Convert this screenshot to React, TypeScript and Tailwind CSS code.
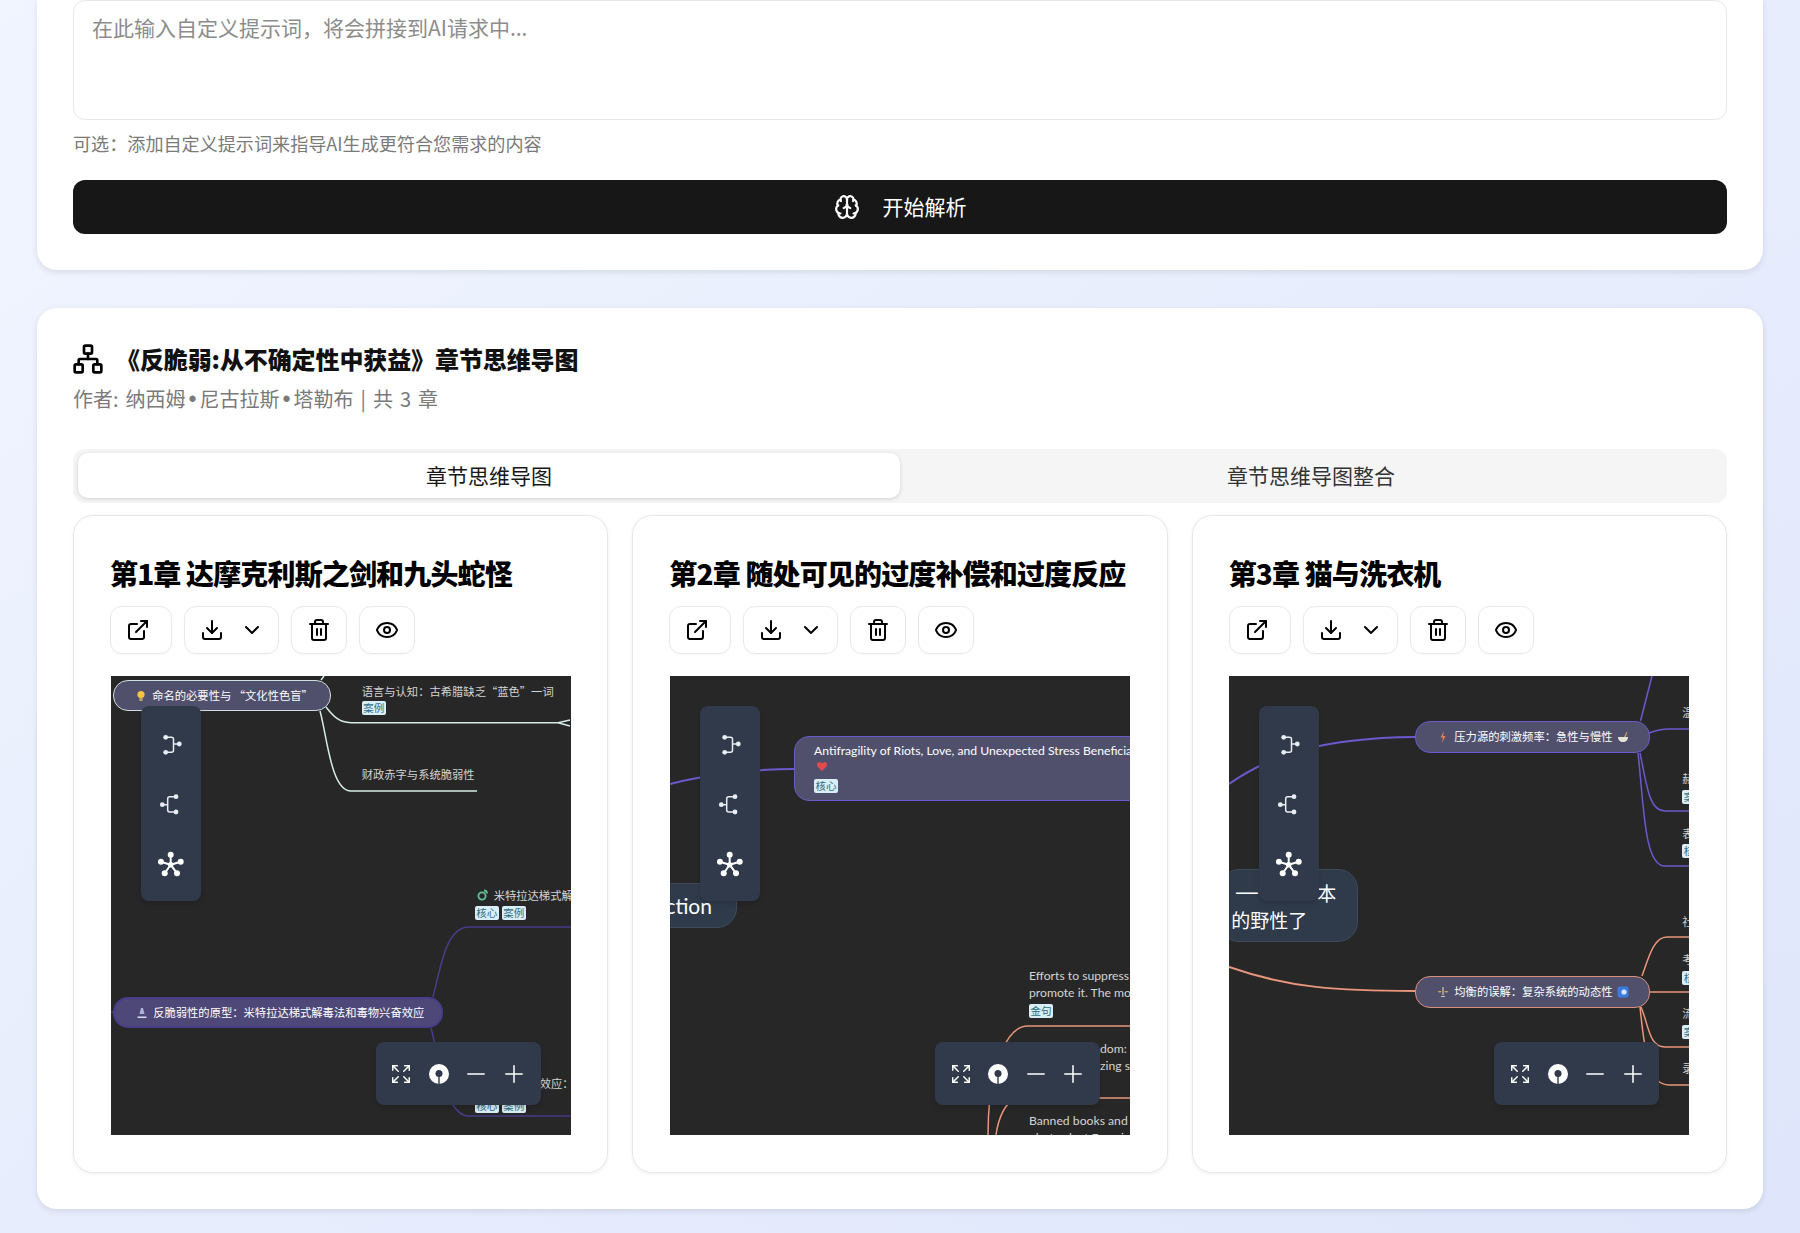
import type { ReactNode } from 'react';
import { Brain, ChevronDown, Download, Expand, ExternalLink, Eye, Minus, Network, Plus, Trash2 } from 'lucide-react';

// mind-elixir side toolbar icons
const RightBranchIcon = () => (
  <svg width="24" height="24" viewBox="0 0 24 24" fill="none" className="text-[#e8edf2]">
    <path d="M7 5.3h5.500a2 2 0 0 1 2 2v11a2 2 0 0 1-2 2H7M14.500 12H20" stroke="currentColor" strokeWidth="1.500" />
    <circle cx="6.700" cy="5.300" r="2.400" fill="currentColor" />
    <circle cx="6.700" cy="20.300" r="2.400" fill="currentColor" />
    <circle cx="20.300" cy="12" r="2.400" fill="currentColor" />
  </svg>
);

const LeftBranchIcon = () => (
  <svg width="24" height="24" viewBox="0 0 24 24" fill="none" className="text-[#e8edf2]">
    <path d="M17 4.700h-6.300a2 2 0 0 0-2 2V18a2 2 0 0 0 2 2H17M8.700 12.700H3.500" stroke="currentColor" strokeWidth="1.500" />
    <circle cx="3.300" cy="12.700" r="2.400" fill="currentColor" />
    <circle cx="17" cy="4.700" r="2.400" fill="currentColor" />
    <circle cx="17" cy="20" r="2.400" fill="currentColor" />
  </svg>
);

const BothBranchIcon = () => (
  <svg width="26" height="26" viewBox="-1 -1 26 26" fill="none" className="text-white">
    <path d="M11.700 12.700V2.700M11.700 12.700 1.700 9.700M11.700 12.700l10-3M11.700 12.700l-6 8.600M11.700 12.700l6.300 8.600" stroke="currentColor" strokeWidth="2" />
    <circle cx="11.700" cy="12.700" r="2.700" fill="currentColor" />
    <circle cx="11.700" cy="2.700" r="3" fill="currentColor" />
    <circle cx="1.900" cy="9.700" r="3" fill="currentColor" />
    <circle cx="21.700" cy="9.700" r="3" fill="currentColor" />
    <circle cx="5.700" cy="21.300" r="3" fill="currentColor" />
    <circle cx="18" cy="21.300" r="3" fill="currentColor" />
  </svg>
);

const LocateIcon = () => (
  <svg width="22" height="22" viewBox="0 0 22 22">
    <circle cx="11" cy="11" r="10" fill="#fff" />
    <circle cx="11" cy="10.500" r="3.500" fill="#303a4b" />
    <path d="M10.300 13h1.400v8.400h-1.400z" fill="#303a4b" />
  </svg>
);

const Emoji = ({ kind }: { kind: string }) => (
  <svg width="12" height="12" viewBox="0 0 12 12" className="shrink-0">
    {kind === 'bulb' && (
      <>
        <circle cx="6" cy="4.500" r="3.600" fill="#f5c542" />
        <rect x="4.400" y="8" width="3.200" height="3" fill="#b9a46a" />
      </>
    )}
    {kind === 'scope' && (
      <>
        <path d="M5 1h2l1.500 6H3.500z" fill="#aab4d8" />
        <path d="M1.500 11h9V9.500h-9z" fill="#d7dcef" />
      </>
    )}
    {kind === 'leaf' && (
      <>
        <circle cx="5" cy="7" r="3.600" fill="none" stroke="#5fc39a" strokeWidth="1.800" />
        <path d="M7 1.500c2 0 3 1 3 3" stroke="#5fc39a" strokeWidth="1.800" fill="none" />
      </>
    )}
    {kind === 'heart' && <path d="M6 11 1.500 6.500C0 4 2 1.500 4 2.200 5 2.500 5.500 3 6 3.500 6.500 3 7 2.500 8 2.200c2-.7 4 1.800 2.500 4.300z" fill="#e5484d" />}
    {kind === 'bolt' && <path d="M7 0 3.500 6.500H6L5 12l3.500-7H6z" fill="#e8804a" />}
    {kind === 'bowl' && (
      <>
        <path d="M1 6h10c0 3-2 5-5 5S1 9 1 6z" fill="#e6e2d8" />
        <path d="M7 6 9.500 1l1 .5L8.500 6z" fill="#c9a26b" />
      </>
    )}
    {kind === 'scale' && (
      <>
        <path d="M6 1v8M4 10.500h4" stroke="#cfc7b8" strokeWidth="1.200" />
        <path d="M1 5h3.500C4.500 7 1 7 1 5zM7.500 5H11c0 2-3.500 2-3.500 0z" fill="#dba24c" />
      </>
    )}
    {kind === 'wave' && (
      <>
        <rect x="0.500" y="0.500" width="11" height="11" rx="2" fill="#3b7be0" />
        <circle cx="7" cy="6" r="2.600" fill="#d6e6fb" />
      </>
    )}
  </svg>
);

const Tag = ({ children, className = '' }: { children: ReactNode; className?: string }) => (
  <span className={`absolute flex h-[14px] w-[24px] items-center justify-center rounded-[2px] bg-[#d9eef6] text-[10.500px] leading-none text-[#2f6f84] ${className}`}>{children}</span>
);

const Label = ({ children, className = '' }: { children: ReactNode; className?: string }) => (
  <span className={`absolute whitespace-nowrap text-[11.300px] leading-[17px] text-[#d4d4d4] ${className}`}>{children}</span>
);

const LatinLabel = ({ children, className = '' }: { children: ReactNode; className?: string }) => (
  <span className={`absolute whitespace-nowrap font-['Lato',sans-serif] text-[12.200px] leading-[17px] text-[#d4d4d4] ${className}`}>{children}</span>
);

const Pill = ({ emoji, after, text, className = '' }: { emoji: string; after?: string; text: string; className?: string }) => (
  <div className={`absolute flex items-center rounded-[15px] pl-[21px] text-[11.300px] leading-none whitespace-nowrap text-white ${className}`}>
    <Emoji kind={emoji} />
    <span className="ml-[5px]">{text}</span>
    {after && <span className="ml-[5px]"><Emoji kind={after} /></span>}
  </div>
);

const Edges = ({ children }: { children: ReactNode }) => (
  <svg viewBox="0 0 460 459" className="absolute inset-0 h-full w-full" fill="none">{children}</svg>
);

const MapOne = () => (
  <>
    <Edges>
      <g stroke="#d5ebe7" strokeWidth="1.500">
        <path d="M213 0 210 4M215 31C222 40 228 46.700 240 46.700H447L459 44M447 46.700 459 50" />
        <path d="M209 35C216 60 220 115 240 115H366" />
      </g>
      <g stroke="#483d8b" strokeWidth="1.500">
        <path d="M322 321C330 290 335 251 358 251H460" />
        <path d="M320 352C330 390 335 440 358 440H460" />
        <path d="M0 336H3" />
      </g>
    </Edges>
    <Pill emoji="bulb" text="命名的必要性与 “文化性色盲”" className="left-[2.500px] top-[4px] h-[31px] w-[218px] border border-[#cfdcdc] bg-[#50506d]" />
    <Label className="left-[251px] top-[7px]">语言与认知：古希腊缺乏“蓝色”一词</Label>
    <Tag className="left-[251px] top-[25px]">案例</Tag>
    <Label className="left-[251px] top-[90px]">财政赤字与系统脆弱性</Label>
    <div className="absolute left-[366px] top-[211px] flex items-center gap-[5px]">
      <Emoji kind="leaf" />
      <span className="whitespace-nowrap text-[11.300px] text-[#d4d4d4]">米特拉达梯式解毒法</span>
    </div>
    <Tag className="left-[364px] top-[230px]">核心</Tag>
    <Tag className="left-[391px] top-[230px]">案例</Tag>
    <Pill emoji="scope" text="反脆弱性的原型：米特拉达梯式解毒法和毒物兴奋效应" className="left-[2.500px] top-[321px] h-[31px] w-[330px] border-2 border-[#483d8b] bg-[#4d4878]" />
    <Label className="left-[429px] top-[399px]">效应：</Label>
    <Tag className="left-[364px] top-[423px]">核心</Tag>
    <Tag className="left-[391px] top-[423px]">案例</Tag>
  </>
);

const MapTwo = () => (
  <>
    <Edges>
      <path d="M0 108C30 100 80 93 124 93" stroke="#6a5acd" strokeWidth="2" />
      <g stroke="#e9967a" strokeWidth="1.500">
        <path d="M322 420C325 390 335 350 358 350H460" />
        <path d="M326 459C328 445 332 430 345 422H460" />
        <path d="M318 459C318 445 319 430 320 420" />
      </g>
    </Edges>
    <div className="absolute left-[124px] top-[60px] h-[65px] w-[400px] rounded-[15px] border-[1.500px] border-[#6a5acd] bg-[#50506d] pl-[19px] pt-[5px] font-['Lato','Noto_Sans_CJK_SC',sans-serif] text-[12.200px] leading-[17px] whitespace-nowrap text-white">
      Antifragility of Riots, Love, and Unexpected Stress Beneficial
      <div className="mt-[1px] ml-[2px]"><Emoji kind="heart" /></div>
    </div>
    <Tag className="left-[144px] top-[103px]">核心</Tag>
    <div className="absolute -left-[80px] top-[207px] flex h-[45px] w-[147px] items-center justify-end rounded-[20px] border border-[#3f4a5c] bg-[#2f3a4b] pr-[24px] font-['Lato',sans-serif] text-[21px] text-white">Inaction</div>
    <LatinLabel className="left-[359px] top-[291px]">Efforts to suppress randomness<br />promote it. The more we try</LatinLabel>
    <Tag className="left-[359px] top-[328px]">金句</Tag>
    <LatinLabel className="left-[430px] top-[364px]">dom: C<br />zing s</LatinLabel>
    <LatinLabel className="left-[359px] top-[436px]">Banned books and<br />photos lost Francis</LatinLabel>
  </>
);

const MapThree = () => (
  <>
    <Edges>
      <g stroke="#6a5acd">
        <path d="M0 108C40 80 90 62 186 61" strokeWidth="2" />
        <path d="M411.500 45 423 0M420 57C428 54 432 53 440 53H460M411 77C418 110 420 135 436 135H460M409 77C415 130 415 190 436 190H460" strokeWidth="1.500" />
      </g>
      <g stroke="#e9967a">
        <path d="M0 291C60 312 110 315 186 315" strokeWidth="2" />
        <path d="M413 300C420 280 425 261 438 261H460M420 316H460M412 331C420 350 420 371 436 371H460M411 331C416 380 420 409 440 409H460" strokeWidth="1.500" />
      </g>
    </Edges>
    <Pill emoji="bolt" after="bowl" text="压力源的刺激频率：急性与慢性" className="left-[186px] top-[45px] h-[32px] w-[235px] border-[1.500px] border-[#6a5acd] bg-[#50506d]" />
    <Pill emoji="scale" after="wave" text="均衡的误解：复杂系统的动态性" className="left-[186px] top-[300px] h-[32px] w-[235px] border-[1.500px] border-[#d9907a] bg-[#50506d]" />
    <Label className="left-[453px] top-[28px]">温</Label>
    <Label className="left-[453px] top-[94px]">赫</Label>
    <Tag className="left-[453px] top-[114px]">案例</Tag>
    <Label className="left-[453px] top-[149px]">表</Label>
    <Tag className="left-[453px] top-[168px]">核心</Tag>
    <Label className="left-[453px] top-[237px]">社</Label>
    <Label className="left-[453px] top-[275px]">考</Label>
    <Tag className="left-[453px] top-[295px]">核心</Tag>
    <Label className="left-[453px] top-[329px]">流</Label>
    <Tag className="left-[453px] top-[349px]">案例</Tag>
    <Label className="left-[453px] top-[384px]">录</Label>
    <div className="absolute -left-[10px] top-[193px] h-[73px] w-[139px] rounded-[20px] border border-[#3f4a5c] bg-[#2f3a4b] pl-[11px] pt-[9px] text-[19px] leading-[27px] text-white">
      <div className="flex w-[105px] items-center justify-between"><span className="ml-[4px] inline-block origin-left scale-x-[1.250]">一</span><span>本</span></div>
      <div>的野性了</div>
    </div>
  </>
);

const MindMap = ({ children }: { children: ReactNode }) => (
  <div className="relative mx-auto h-[459px] w-[460px] overflow-hidden bg-[#272727]">
    {children}
    <div className="absolute left-[30px] top-[30px] flex h-[195px] w-[60px] flex-col items-center rounded-[8px] bg-[#303a4b] pt-[8px] shadow-md">
      <span className="flex h-[60px] items-center"><RightBranchIcon /></span>
      <span className="flex h-[60px] items-center"><LeftBranchIcon /></span>
      <span className="flex h-[60px] items-center"><BothBranchIcon /></span>
    </div>
    <div className="absolute bottom-[30px] right-[30px] flex h-[63px] w-[165px] items-center rounded-[8px] bg-[#303a4b] pl-[7px] text-white shadow-md">
      <span className="flex w-[37.500px] justify-center"><Expand size={22} strokeWidth={1.6} /></span>
      <span className="flex w-[37.500px] justify-center"><LocateIcon /></span>
      <span className="flex w-[37.500px] justify-center"><Minus size={28} strokeWidth={1.3} /></span>
      <span className="flex w-[37.500px] justify-center"><Plus size={28} strokeWidth={1.3} /></span>
    </div>
  </div>
);

const ActionButton = ({ children, className = '' }: { children: ReactNode; className?: string }) => (
  <button className={`flex h-[48px] items-center rounded-[12px] border border-[#e9e9e9] bg-white text-black shadow-[0_1px_2px_rgba(0,0,0,0.03)] ${className}`}>{children}</button>
);

const ChapterCard = ({ title, children }: { title: string; children: ReactNode }) => (
  <div className="rounded-[20px] border border-[#e5e7eb] bg-white px-[36px] pb-[37px] pt-[36px] shadow-[0_1px_4px_rgba(0,0,0,0.06)]">
    <h3 className="whitespace-nowrap text-[28px] leading-[42px] font-black tracking-[-0.85px] text-black">{title}</h3>
    <div className="mt-[12px] flex gap-[12px]">
      <ActionButton className="w-[62px] pl-[15px]"><ExternalLink size={24} /></ActionButton>
      <ActionButton className="w-[95px] pl-[15px]"><Download size={24} /><ChevronDown size={24} className="ml-[16px]" /></ActionButton>
      <ActionButton className="w-[56px] justify-center"><Trash2 size={24} /></ActionButton>
      <ActionButton className="w-[56px] justify-center"><Eye size={24} /></ActionButton>
    </div>
    <div className="mt-[22px]">
      <MindMap>{children}</MindMap>
    </div>
  </div>
);

export default function App() {
  return (
    <div className="min-h-screen bg-linear-to-br from-[#f1f5ff] to-[#dfe6fb] px-[37px] pb-[24px] font-['Noto_Sans_CJK_SC',sans-serif] text-[#171717]">
      {/* custom prompt card, scrolled past its top */}
      <section className="rounded-b-[20px] bg-white px-[36px] pb-[36px] shadow-[0_2px_6px_rgba(0,0,0,0.1)]">
        <textarea
          readOnly
          placeholder="在此输入自定义提示词，将会拼接到AI请求中..."
          className="block h-[120px] w-full resize-none rounded-[12px] border border-[#e8e8e8] bg-white px-[18px] py-[8px] text-[21px] leading-[36px] outline-none placeholder:text-[#8c8c8c]"
        />
        <p className="mt-[9px] text-[18.100px] leading-[28px] text-[#7a7a7a]">可选：添加自定义提示词来指导AI生成更符合您需求的内容</p>
        <button className="mt-[23px] flex h-[54px] w-full items-center justify-center gap-[23px] rounded-[12px] bg-[#171717] text-[21px] text-white">
          <Brain size={26} strokeWidth={2} />
          开始解析
        </button>
      </section>

      {/* chapter mind maps */}
      <section className="mt-[38px] rounded-[20px] bg-white px-[36px] pb-[36px] pt-[35px] shadow-[0_2px_6px_rgba(0,0,0,0.1)]">
        <div className="flex items-center gap-[12px]">
          <Network size={32} strokeWidth={2} className="-ml-[1px] text-black" />
          <h2 className="text-[24px] leading-[32px] font-black tracking-[-0.1px] text-[#111]">《反脆弱:从不确定性中获益》章节思维导图</h2>
        </div>
        <p className="mt-[10px] text-[20px] leading-[28px] text-[#7a7a7a] [word-spacing:2.500px]">
          作者: 纳西姆<span className="inline-block w-[14px] text-center font-['Liberation_Sans',sans-serif] text-[23px] leading-none">•</span>尼古拉斯<span className="inline-block w-[14px] text-center font-['Liberation_Sans',sans-serif] text-[23px] leading-none">•</span>塔勒布 | 共 3 章
        </p>

        <div className="mt-[36px] grid grid-cols-2 rounded-[12px] bg-[#f5f5f5] px-[5px] pb-[5px] pt-[4px] text-[21px]">
          <div className="flex h-[45px] items-center justify-center rounded-[10px] bg-white text-[#171717] shadow-[0_1px_4px_rgba(0,0,0,0.15)]">章节思维导图</div>
          <div className="flex h-[45px] items-center justify-center text-[#333]">章节思维导图整合</div>
        </div>

        <div className="mt-[12px] grid grid-cols-3 gap-[24px]">
          <ChapterCard title="第1章 达摩克利斯之剑和九头蛇怪"><MapOne /></ChapterCard>
          <ChapterCard title="第2章 随处可见的过度补偿和过度反应"><MapTwo /></ChapterCard>
          <ChapterCard title="第3章 猫与洗衣机"><MapThree /></ChapterCard>
        </div>
      </section>
    </div>
  );
}
